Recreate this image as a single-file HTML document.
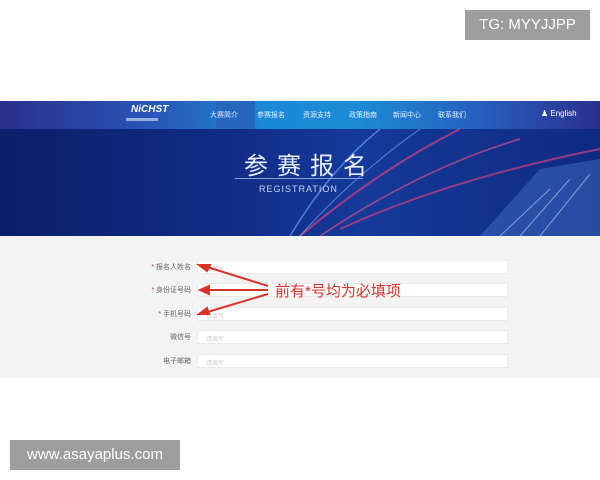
<!DOCTYPE html>
<html><head><meta charset="utf-8"><style>
*{margin:0;padding:0;box-sizing:border-box}
body{width:600px;height:480px;background:#fff;position:relative;overflow:hidden;font-family:"Liberation Sans","Noto Sans CJK SC",sans-serif}
.nav{position:absolute;left:0;top:101px;width:600px;height:28px;background:linear-gradient(90deg,#2b2f8c 0%,#2a55b8 25%,#1a8ad8 45%,#1c8ad6 60%,#2660c0 80%,#2b2f8c 100%)}
.nav span{position:absolute;top:9px;font-size:7px;color:#e8f0ff}
.act{position:absolute;left:216px;top:0;width:39px;height:28px;background:#2566bf}
.banner{position:absolute;left:0;top:129px;width:600px;height:107px;background:linear-gradient(90deg,#0b1f6a 0%,#112d88 40%,#143a9a 60%,#0f2a80 100%);overflow:hidden}
.form{position:absolute;left:0;top:236px;width:600px;height:142px;background:#f3f3f3}
.lab{position:absolute;font-size:7px;color:#666;text-align:right;width:80px;left:111px}
.lab b{color:#d33;font-weight:normal}
.in{position:absolute;left:197px;width:311px;height:14px;background:#fff;border:1px solid #eaeaea;font-size:6px;color:#ccc;padding:3px 8px}
.wm{position:absolute;background:#9d9d9d;color:#fff;font-size:15px}
</style></head><body>
<div class="nav">
<div class="act"></div>
<div style="position:absolute;left:131px;top:3px;color:#fff;font-style:italic;font-weight:bold;font-size:10px">NiCHST</div>
<div style="position:absolute;left:126px;top:17px;width:32px;height:3px;background:#c8d4f0;opacity:.7"></div>
<span style="left:210px">大赛简介</span><span style="left:257px">参赛报名</span><span style="left:303px">资源支持</span><span style="left:349px">政策指南</span><span style="left:393px">新闻中心</span><span style="left:438px">联系我们</span>
<span style="left:541px;top:8px;font-size:8px;color:#fff">&#9823; English</span>
</div>
<div class="banner">
<svg width="600" height="107" style="position:absolute;left:0;top:0">
<path d="M300 107 Q380 40 460 0" stroke="#c8407a" stroke-width="2" fill="none" opacity=".8"/>
<path d="M320 107 Q420 40 520 10" stroke="#e0508a" stroke-width="1.5" fill="none" opacity=".7"/>
<path d="M340 100 Q450 50 600 20" stroke="#d04080" stroke-width="2" fill="none" opacity=".7"/>
<path d="M290 107 Q330 40 380 0" stroke="#6aa0ff" stroke-width="1.5" fill="none" opacity=".7"/>
<path d="M300 107 Q350 50 420 0" stroke="#8ab8ff" stroke-width="1" fill="none" opacity=".6"/>
<path d="M480 107 L540 40 L600 30 L600 107Z" fill="#5a8ae0" opacity=".35"/>
<path d="M500 107 L550 60 M520 107 L570 50 M540 107 L590 45" stroke="#bcd4ff" stroke-width="1" opacity=".6"/>
</svg>
<div style="position:absolute;left:244px;top:17px;font-size:24px;color:#e8eeff;letter-spacing:9px">参赛报名</div>
<div style="position:absolute;left:235px;top:49px;width:128px;height:1px;background:#8aa0d8"></div>
<div style="position:absolute;left:259px;top:55px;font-size:9px;color:#c8d4f0;letter-spacing:1px">REGISTRATION</div>
</div>
<div class="form">
<div class="lab" style="top:26px"><b>* </b>报名人姓名</div><div class="in" style="top:24px">请填写</div>
<div class="lab" style="top:49px"><b>* </b>身份证号码</div><div class="in" style="top:47px"></div>
<div class="lab" style="top:73px"><b>* </b>手机号码</div><div class="in" style="top:71px">请填写</div>
<div class="lab" style="top:96px">微信号</div><div class="in" style="top:94px">请填写</div>
<div class="lab" style="top:120px">电子邮箱</div><div class="in" style="top:118px">请填写</div>
<div style="position:absolute;left:275px;top:44px;font-size:15px;color:#d9322b">前有*号均为必填项</div>
<svg width="600" height="142" style="position:absolute;left:0;top:0">
<g stroke="#d9322b" stroke-width="2" fill="#d9322b">
<line x1="268" y1="50" x2="204" y2="30"/><polygon points="199,29 210,29 207,35"/>
<line x1="268" y1="54" x2="206" y2="54"/><polygon points="200,54 209,50 209,58"/>
<line x1="268" y1="58" x2="204" y2="77"/><polygon points="199,78 207,72 209,78"/>
</g></svg>
</div>
<div class="wm" style="left:465px;top:10px;width:125px;height:30px;line-height:30px;text-align:center">TG: MYYJJPP</div>
<div class="wm" style="left:10px;top:440px;width:170px;height:30px;line-height:30px;text-align:center">www.asayaplus.com</div>
</body></html>
